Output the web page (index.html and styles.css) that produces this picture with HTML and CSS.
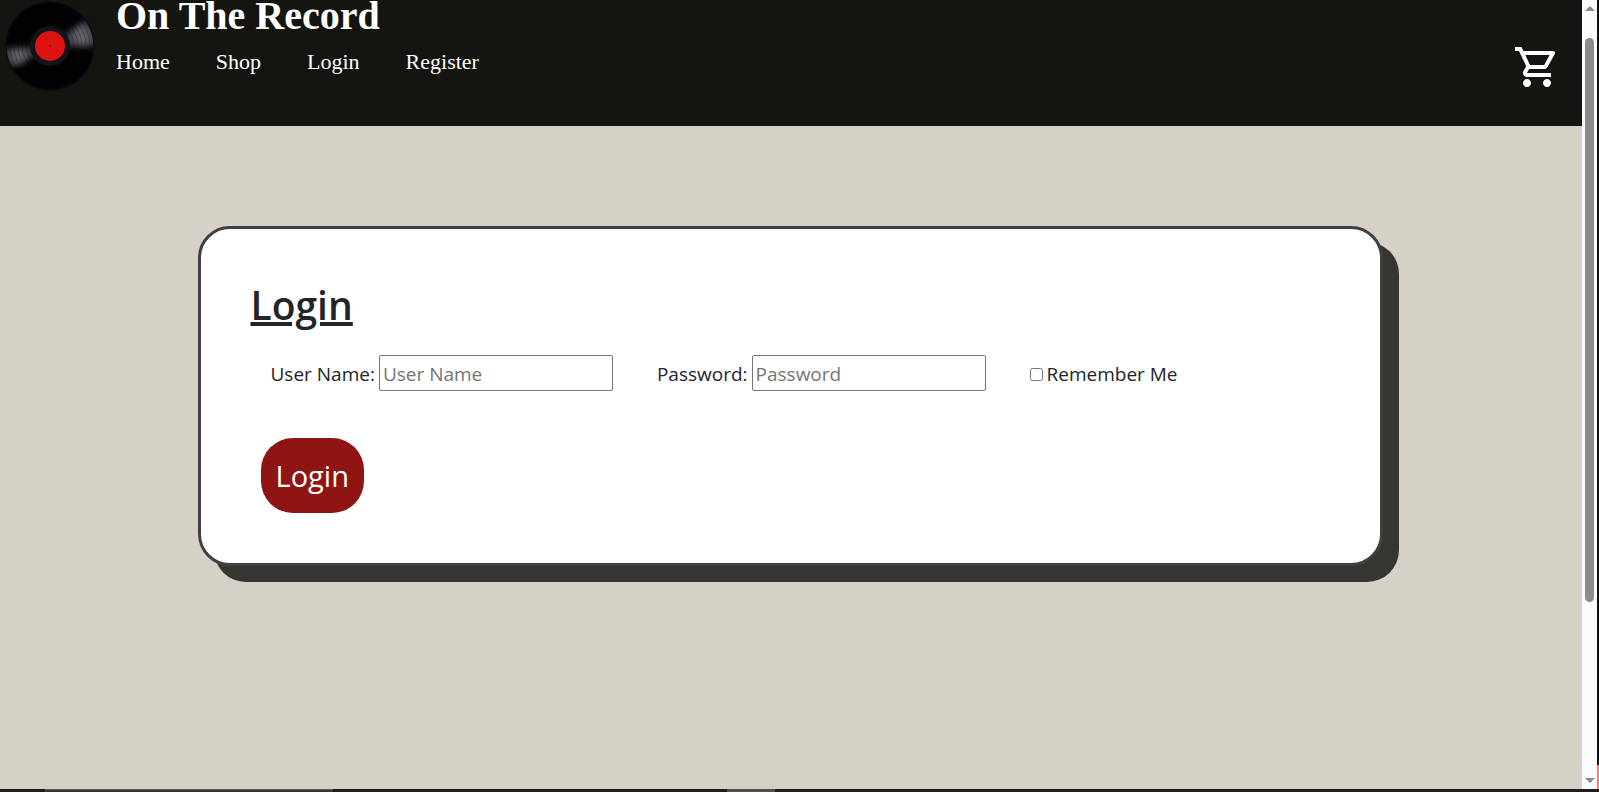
FILE: index.html
```html
<!DOCTYPE html>
<html lang="en">
<head>
<meta charset="utf-8">
<meta name="viewport" content="width=device-width, initial-scale=1">
<title>On The Record</title>
<link rel="stylesheet" href="styles.css">
</head>
<body>
<div class="window">
  <div class="page">
    <header class="site-header">
      <svg class="logo" viewBox="0 0 90 90" aria-hidden="true">
        <defs>
          <clipPath id="disc"><circle cx="45" cy="45" r="44"/></clipPath>
          <filter id="soft" x="-30%" y="-30%" width="160%" height="160%"><feGaussianBlur stdDeviation="3"/></filter>
          <radialGradient id="shine" gradientUnits="userSpaceOnUse" cx="45" cy="45" r="44">
            <stop offset=".4" stop-color="#8a8a96" stop-opacity=".4"/>
            <stop offset=".75" stop-color="#8a8a96" stop-opacity=".75"/>
            <stop offset="1" stop-color="#70707e" stop-opacity=".6"/>
          </radialGradient>
        </defs>
        <circle cx="45" cy="45" r="44.500" fill="#020204"/>
        <g clip-path="url(#disc)">
          <g fill="url(#shine)" filter="url(#soft)">
            <path d="M45 45 80 20 91 28 91 45Z"/>
            <path d="M45 45 0 48 0 62 12 65Z"/>
          </g>
          <g fill="none" stroke="#08080e" stroke-opacity=".25">
            <circle cx="45" cy="45" r="24"/><circle cx="45" cy="45" r="28"/><circle cx="45" cy="45" r="32"/>
            <circle cx="45" cy="45" r="36"/><circle cx="45" cy="45" r="40"/>
          </g>
        </g>
        <circle cx="45" cy="45" r="44" fill="none" stroke="#0c0c16"/>
        <circle cx="45" cy="45" r="20" fill="#12121a"/>
        <circle cx="45" cy="45" r="15" fill="#df1212"/>
        <circle cx="45" cy="45" r="1" fill="#400"/>
      </svg>
      <div class="brand">
        <h1 class="brand-name">On The Record</h1>
        <nav class="nav">
          <a href="#">Home</a>
          <a href="#">Shop</a>
          <a href="#">Login</a>
          <a href="#">Register</a>
        </nav>
      </div>
      <a class="cart" href="#" aria-label="Cart">
        <svg viewBox="0 0 24 24" aria-hidden="true"><path fill="currentColor" d="M15.550 13c.75 0 1.410-.41 1.750-1.030l3.580-6.490A.996.996 0 0 0 20.010 4H5.210l-.94-2H1v2h2l3.600 7.590-1.350 2.440C4.520 15.370 5.480 17 7 17h12v-2H7l1.100-2h7.450zM6.160 6h12.150l-2.760 5H8.530L6.160 6zM7 18c-1.100 0-1.990.9-1.990 2S5.900 22 7 22s2-.9 2-2-.9-2-2-2zm10 0c-1.100 0-1.990.9-1.990 2s.89 2 1.990 2 2-.9 2-2-.9-2-2-2z"/></svg>
      </a>
    </header>
    <main class="content">
      <form class="card">
        <h2 class="card-title">Login</h2>
        <div class="fields">
          <div class="field">
            <label for="user">User Name:</label>
            <input class="text-input" id="user" type="text" placeholder="User Name">
          </div>
          <div class="field">
            <label for="pass">Password:</label>
            <input class="text-input" id="pass" type="password" placeholder="Password">
          </div>
          <div class="field">
            <input class="check" id="remember" type="checkbox">
            <label for="remember">Remember Me</label>
          </div>
        </div>
        <button class="submit" type="button">Login</button>
      </form>
    </main>
  </div>
  <div class="scrollbar" aria-hidden="true">
    <span class="arrow arrow-up"></span>
    <span class="track"><span class="thumb"></span></span>
    <span class="arrow arrow-down"></span>
  </div>
  <div class="edge" aria-hidden="true"><span class="edge-accent"></span></div>
  <div class="taskbar" aria-hidden="true">
    <span class="task task-wide"></span>
    <span class="task task-small"></span>
  </div>
</div>
</body>
</html>
```
FILE: styles.css
```css
* { box-sizing: border-box; }

body { margin: 0; font-family: "Segoe UI", "Open Sans", sans-serif; color: #212529; }

.window {
  display: grid;
  grid-template-columns: 1fr 15px 2px;
  grid-template-rows: 1fr 3px;
  height: 100vh;
  overflow: hidden;
}

.page { background: #d6d1c6; overflow: hidden; }

.site-header {
  display: flex;
  height: 126px;
  padding: 0 21px 0 5px;
  background: #141411;
  color: #fff;
  font-family: "Times New Roman", "Liberation Serif", serif;
}
.logo { width: 90px; height: 90px; margin-top: 1px; }
.brand { margin-left: 21px; }
.brand-name { margin: 0; font-size: 40px; line-height: 32px; }
.nav { display: flex; gap: 46px; margin-top: 17px; font-size: 22px; line-height: 26px; }
.nav a { color: #fff; text-decoration: none; }
.cart { margin: 43px 0 0 auto; color: #fff; }
.cart svg { display: block; width: 48px; height: 48px; }

.content { padding: 100px 2px 0 0; }
.card {
  width: 75%;
  margin: 0 auto;
  padding: 50px;
  background: #fff;
  border: 3px solid #404042;
  border-radius: 32px;
  box-shadow: 16px 16px #37352f;
}
.card-title {
  margin: 0 0 24px;
  font-size: 39px;
  font-weight: 600;
  line-height: 52px;
  text-decoration: underline;
  text-decoration-thickness: 4px;
  text-underline-offset: 2px;
}
.fields {
  display: flex;
  flex-wrap: wrap;
  gap: 44px;
  padding: 0 20px;
  font-size: 19px;
  line-height: 34px;
}
.field { display: flex; align-items: center; gap: 4px; }
.field label { padding-top: 2px; }
.text-input {
  width: 234px;
  height: 36px;
  padding: 2px 3px 0;
  border: 1px solid #767676;
  border-radius: 2px;
  background: #fff;
  font: inherit;
}
.text-input::placeholder { color: #757575; opacity: 1; }
.check { width: 13px; height: 13px; margin: 2px 0 0; }
.submit {
  display: block;
  margin: 47px 0 0 10px;
  padding: 15px;
  border: 0;
  border-radius: 32px;
  background: #8f1515;
  color: #fff;
  font-family: inherit;
  font-size: 29px;
  line-height: 45px;
}

.scrollbar {
  display: flex;
  flex-direction: column;
  align-items: center;
  padding: 6px 0;
  background: #fcfcfc;
}
.arrow { border: 5px solid transparent; }
.arrow-up { border-top: 0; border-bottom: 5px solid #8b8b8b; }
.arrow-down { border-bottom: 0; border-top: 5px solid #8b8b8b; }
.track { flex: 1; width: 9px; padding: 27px 0 17px; }
.thumb { display: block; height: 78%; border-radius: 5px; background: #8b8b8b; }

.edge { display: flex; align-items: flex-end; background: #0d0f1e; }
.edge-accent { width: 2px; height: 24px; background: #fa7f72; }

.taskbar { grid-column: 1 / -1; display: flex; background: #201c1c; }
.task-wide { width: 18%; margin-left: 45px; background: #383437; border-top: 1px solid #5c585a; }
.task-small { width: 3%; margin-left: 394px; background: #545052; }
```
